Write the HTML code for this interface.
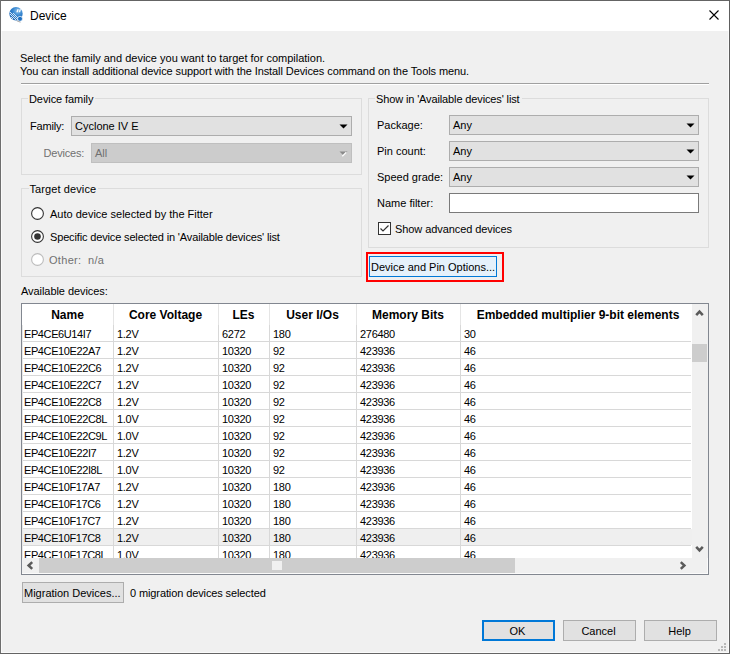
<!DOCTYPE html><html><head><meta charset="utf-8"><style>
*{margin:0;padding:0;box-sizing:border-box}
html,body{width:730px;height:654px;overflow:hidden;background:#f0f0f0}
body{position:relative;font-family:"Liberation Sans",sans-serif}
.b{position:absolute}
.t{position:absolute;white-space:nowrap;font-size:11px;line-height:13px;color:#000}
.t12{position:absolute;white-space:nowrap;font-size:12px;line-height:13px;color:#000}
.h{position:absolute;white-space:nowrap;font-size:12px;line-height:13px;font-weight:bold;color:#000;text-align:center}
.c{position:absolute;white-space:nowrap;font-size:11px;line-height:13px;color:#000;letter-spacing:-0.4px}
.g{color:#707070}
</style></head><body>
<div class="b" style="left:0px;top:0px;width:730px;height:654px;background:#f0f0f0"></div>
<div class="b" style="left:0px;top:0px;width:730px;height:31px;background:#fff"></div>
<div class="b" style="left:0px;top:0px;width:730px;height:1px;background:#646464"></div>
<div class="b" style="left:0px;top:0px;width:1px;height:654px;background:#6e6e6e"></div>
<div class="b" style="left:729px;top:0px;width:1px;height:654px;background:#5e5e5e"></div>
<div class="b" style="left:0px;top:653px;width:730px;height:1px;background:#646464"></div>
<div class="b" style="left:1px;top:31px;width:1px;height:622px;background:#fafafa"></div>
<div class="b" style="left:1px;top:652px;width:728px;height:1px;background:#fafafa"></div>
<div class="b" style="left:728px;top:31px;width:1px;height:622px;background:#fafafa"></div>
<svg class="b" style="left:6px;top:4px" width="18" height="20" viewBox="0 0 18 20"><defs><radialGradient id="gg" cx="0.62" cy="0.3" r="0.8"><stop offset="0" stop-color="#8cc0ea"/><stop offset="0.45" stop-color="#3585cf"/><stop offset="1" stop-color="#1a62b0"/></radialGradient></defs><circle cx="10.0" cy="9.7" r="6.7" fill="url(#gg)"/><g fill="#ffffff" opacity="0.8"><rect x="4" y="8" width="1" height="1"/><rect x="5" y="9" width="1" height="1"/><rect x="7" y="9" width="1" height="1"/><rect x="4" y="10" width="1" height="1"/><rect x="6" y="10" width="1" height="1"/><rect x="8" y="10" width="1" height="1"/><rect x="5" y="11" width="1" height="1"/><rect x="7" y="11" width="1" height="1"/><rect x="9" y="11" width="1" height="1"/><rect x="6" y="12" width="1" height="1"/><rect x="8" y="12" width="1" height="1"/><rect x="10" y="12" width="1" height="1"/><rect x="5" y="13" width="1" height="1"/><rect x="7" y="13" width="1" height="1"/><rect x="9" y="13" width="1" height="1"/><rect x="11" y="13" width="1" height="1"/><rect x="6" y="14" width="1" height="1"/><rect x="8" y="14" width="1" height="1"/><rect x="10" y="14" width="1" height="1"/><rect x="12" y="14" width="1" height="1"/><rect x="9" y="15" width="1" height="1"/><rect x="11" y="15" width="1" height="1"/></g><path d="M11.3 5.2 L12.8 5.2 L11.8 8.3 L10.3 8.3Z M13.6 5.2 L15.1 5.2 L14.1 8.3 L12.6 8.3Z" fill="#fff" opacity="0.95"/><circle cx="14" cy="14.8" r="2.5" fill="#1e6fc0" stroke="#ffffff" stroke-width="0.7"/><path d="M10.8 16.8 L14.5 18.2" stroke="#8a8a8a" stroke-width="0.9" opacity="0.8"/></svg>
<div class="t12" style="left:30px;top:10px;">Device</div>
<svg class="b" style="left:708px;top:9px" width="12" height="12" viewBox="0 0 12 12"><path d="M1.5 1.5L10.5 10.5M10.5 1.5L1.5 10.5" stroke="#000" stroke-width="1.1"/></svg>
<div class="t" style="left:20px;top:52px;">Select the family and device you want to target for compilation.</div>
<div class="t" style="left:20px;top:65px;letter-spacing:-0.09px">You can install additional device support with the Install Devices command on the Tools menu.</div>
<div class="b" style="left:21px;top:83px;width:688px;height:1px;background:#a0a0a0"></div>
<div class="b" style="left:21px;top:84px;width:688px;height:1px;background:#fff"></div>
<div class="b" style="left:21px;top:98px;width:341px;height:77px;border:1px solid #dcdcdc"></div>
<div class="t" style="left:28.3px;top:93px;padding:0 2px 0 0.7px;background:#f0f0f0;letter-spacing:-0.08px">Device family</div>
<div class="b" style="left:21px;top:188px;width:341px;height:89px;border:1px solid #dcdcdc"></div>
<div class="t" style="left:28.8px;top:183px;padding:0 2px 0 0.7px;background:#f0f0f0;letter-spacing:0.1px">Target device</div>
<div class="b" style="left:368px;top:98px;width:341px;height:150px;border:1px solid #dcdcdc"></div>
<div class="t" style="left:375.3px;top:93px;padding:0 2px 0 0.7px;background:#f0f0f0;letter-spacing:-0.13px">Show in 'Available devices' list</div>
<div class="t" style="left:30px;top:120px;letter-spacing:-0.2px">Family:</div>
<div class="b" style="left:71px;top:116px;width:281px;height:20px;background:#e1e1e1;border:1px solid #adadad"></div>
<div class="t" style="left:75px;top:120px;">Cyclone IV E</div>
<svg class="b" style="left:339px;top:124px" width="9" height="6" viewBox="0 0 9 6"><path d="M0.5 0.5H8.5L4.5 4.5Z" fill="#000"/></svg>
<div class="t g" style="left:43.5px;top:147px;letter-spacing:-0.2px">Devices:</div>
<div class="b" style="left:91px;top:143px;width:261px;height:20px;background:#cccccc;border:1px solid #bfbfbf"></div>
<div class="t g" style="left:95px;top:147px;">All</div>
<svg class="b" style="left:339px;top:151px" width="9" height="6" viewBox="0 0 9 6"><path d="M0.5 0.5H8.5L4.5 4.5Z" fill="#8a8a8a"/><path d="M3.3 5.2L7.3 1.3" stroke="#fff" stroke-width="1.3"/></svg>
<svg class="b" style="left:30px;top:206px" width="14" height="14" viewBox="0 0 14 14"><circle cx="7.5" cy="7.5" r="5.9" fill="#fff" stroke="#333" stroke-width="1.1"/></svg>
<svg class="b" style="left:30px;top:229px" width="14" height="14" viewBox="0 0 14 14"><circle cx="7.5" cy="7.5" r="5.9" fill="#fff" stroke="#333" stroke-width="1.1"/><circle cx="7.5" cy="7.5" r="3.3" fill="#333"/></svg>
<svg class="b" style="left:30px;top:252px" width="14" height="14" viewBox="0 0 14 14"><circle cx="7.5" cy="7.5" r="5.9" fill="#fff" stroke="#bcbcbc" stroke-width="1.1"/></svg>
<div class="t" style="left:50px;top:208px;">Auto device selected by the Fitter</div>
<div class="t" style="left:50px;top:231px;letter-spacing:-0.15px">Specific device selected in 'Available devices' list</div>
<div class="t g" style="left:49px;top:254px;letter-spacing:0.3px">Other:&nbsp; n/a</div>
<div class="t" style="left:377px;top:119px;">Package:</div>
<div class="t" style="left:377px;top:145px;">Pin count:</div>
<div class="t" style="left:377px;top:171px;">Speed grade:</div>
<div class="t" style="left:377px;top:197px;">Name filter:</div>
<div class="b" style="left:449px;top:115px;width:250px;height:20px;background:#e1e1e1;border:1px solid #adadad"></div>
<div class="t" style="left:453px;top:119px;">Any</div>
<svg class="b" style="left:686px;top:123px" width="9" height="6" viewBox="0 0 9 6"><path d="M0.5 0.5H8.5L4.5 4.5Z" fill="#000"/></svg>
<div class="b" style="left:449px;top:141px;width:250px;height:20px;background:#e1e1e1;border:1px solid #adadad"></div>
<div class="t" style="left:453px;top:145px;">Any</div>
<svg class="b" style="left:686px;top:149px" width="9" height="6" viewBox="0 0 9 6"><path d="M0.5 0.5H8.5L4.5 4.5Z" fill="#000"/></svg>
<div class="b" style="left:449px;top:167px;width:250px;height:20px;background:#e1e1e1;border:1px solid #adadad"></div>
<div class="t" style="left:453px;top:171px;">Any</div>
<svg class="b" style="left:686px;top:175px" width="9" height="6" viewBox="0 0 9 6"><path d="M0.5 0.5H8.5L4.5 4.5Z" fill="#000"/></svg>
<div class="b" style="left:449px;top:193px;width:250px;height:20px;background:#fff;border:1px solid #7a7a7a"></div>
<div class="b" style="left:378px;top:222px;width:13px;height:13px;background:#fff;border:1px solid #333"></div>
<svg class="b" style="left:378px;top:222px" width="13" height="13" viewBox="0 0 13 13"><path d="M2.5 6.5L5 9L10.5 3.5" fill="none" stroke="#333" stroke-width="1.2"/></svg>
<div class="t" style="left:395px;top:223px;letter-spacing:-0.08px">Show advanced devices</div>
<div class="b" style="left:366px;top:252px;width:138px;height:30px;border:2px solid #ff0000"></div>
<div class="b" style="left:369px;top:256px;width:128px;height:21px;background:#e5f1fb;border:1px solid #0078d7"></div>
<div class="t" style="left:371px;top:261px;">Device and Pin Options...</div>
<div class="t" style="left:21px;top:285px;letter-spacing:-0.06px">Available devices:</div>
<div class="b" style="left:21px;top:303px;width:688px;height:272px;background:#fff;border:1px solid #828790"></div>
<div class="b" style="left:113px;top:304px;width:1px;height:21px;background:#e5e5e5"></div>
<div class="b" style="left:218px;top:304px;width:1px;height:21px;background:#e5e5e5"></div>
<div class="b" style="left:269px;top:304px;width:1px;height:21px;background:#e5e5e5"></div>
<div class="b" style="left:356px;top:304px;width:1px;height:21px;background:#e5e5e5"></div>
<div class="b" style="left:460px;top:304px;width:1px;height:21px;background:#e5e5e5"></div>
<div class="h" style="left:22px;top:309px;width:91px">Name</div>
<div class="h" style="left:113px;top:309px;width:105px">Core Voltage</div>
<div class="h" style="left:218px;top:309px;width:51px">LEs</div>
<div class="h" style="left:269px;top:309px;width:87px">User I/Os</div>
<div class="h" style="left:356px;top:309px;width:104px">Memory Bits</div>
<div class="h" style="left:460px;top:309px;width:236px">Embedded multiplier 9-bit elements</div>
<div class="c" style="left:24px;top:328px;letter-spacing:-0.4px">EP4CE6U14I7</div>
<div class="c" style="left:117px;top:328px;letter-spacing:-0.3px">1.2V</div>
<div class="c" style="left:222px;top:328px;letter-spacing:-0.3px">6272</div>
<div class="c" style="left:273px;top:328px;letter-spacing:-0.3px">180</div>
<div class="c" style="left:360px;top:328px;letter-spacing:-0.3px">276480</div>
<div class="c" style="left:464px;top:328px;letter-spacing:-0.3px">30</div>
<div class="c" style="left:24px;top:345px;letter-spacing:-0.4px">EP4CE10E22A7</div>
<div class="c" style="left:117px;top:345px;letter-spacing:-0.3px">1.2V</div>
<div class="c" style="left:222px;top:345px;letter-spacing:-0.3px">10320</div>
<div class="c" style="left:273px;top:345px;letter-spacing:-0.3px">92</div>
<div class="c" style="left:360px;top:345px;letter-spacing:-0.3px">423936</div>
<div class="c" style="left:464px;top:345px;letter-spacing:-0.3px">46</div>
<div class="c" style="left:24px;top:362px;letter-spacing:-0.4px">EP4CE10E22C6</div>
<div class="c" style="left:117px;top:362px;letter-spacing:-0.3px">1.2V</div>
<div class="c" style="left:222px;top:362px;letter-spacing:-0.3px">10320</div>
<div class="c" style="left:273px;top:362px;letter-spacing:-0.3px">92</div>
<div class="c" style="left:360px;top:362px;letter-spacing:-0.3px">423936</div>
<div class="c" style="left:464px;top:362px;letter-spacing:-0.3px">46</div>
<div class="c" style="left:24px;top:379px;letter-spacing:-0.4px">EP4CE10E22C7</div>
<div class="c" style="left:117px;top:379px;letter-spacing:-0.3px">1.2V</div>
<div class="c" style="left:222px;top:379px;letter-spacing:-0.3px">10320</div>
<div class="c" style="left:273px;top:379px;letter-spacing:-0.3px">92</div>
<div class="c" style="left:360px;top:379px;letter-spacing:-0.3px">423936</div>
<div class="c" style="left:464px;top:379px;letter-spacing:-0.3px">46</div>
<div class="c" style="left:24px;top:396px;letter-spacing:-0.4px">EP4CE10E22C8</div>
<div class="c" style="left:117px;top:396px;letter-spacing:-0.3px">1.2V</div>
<div class="c" style="left:222px;top:396px;letter-spacing:-0.3px">10320</div>
<div class="c" style="left:273px;top:396px;letter-spacing:-0.3px">92</div>
<div class="c" style="left:360px;top:396px;letter-spacing:-0.3px">423936</div>
<div class="c" style="left:464px;top:396px;letter-spacing:-0.3px">46</div>
<div class="c" style="left:24px;top:413px;letter-spacing:-0.4px">EP4CE10E22C8L</div>
<div class="c" style="left:117px;top:413px;letter-spacing:-0.3px">1.0V</div>
<div class="c" style="left:222px;top:413px;letter-spacing:-0.3px">10320</div>
<div class="c" style="left:273px;top:413px;letter-spacing:-0.3px">92</div>
<div class="c" style="left:360px;top:413px;letter-spacing:-0.3px">423936</div>
<div class="c" style="left:464px;top:413px;letter-spacing:-0.3px">46</div>
<div class="c" style="left:24px;top:430px;letter-spacing:-0.4px">EP4CE10E22C9L</div>
<div class="c" style="left:117px;top:430px;letter-spacing:-0.3px">1.0V</div>
<div class="c" style="left:222px;top:430px;letter-spacing:-0.3px">10320</div>
<div class="c" style="left:273px;top:430px;letter-spacing:-0.3px">92</div>
<div class="c" style="left:360px;top:430px;letter-spacing:-0.3px">423936</div>
<div class="c" style="left:464px;top:430px;letter-spacing:-0.3px">46</div>
<div class="c" style="left:24px;top:447px;letter-spacing:-0.4px">EP4CE10E22I7</div>
<div class="c" style="left:117px;top:447px;letter-spacing:-0.3px">1.2V</div>
<div class="c" style="left:222px;top:447px;letter-spacing:-0.3px">10320</div>
<div class="c" style="left:273px;top:447px;letter-spacing:-0.3px">92</div>
<div class="c" style="left:360px;top:447px;letter-spacing:-0.3px">423936</div>
<div class="c" style="left:464px;top:447px;letter-spacing:-0.3px">46</div>
<div class="c" style="left:24px;top:464px;letter-spacing:-0.4px">EP4CE10E22I8L</div>
<div class="c" style="left:117px;top:464px;letter-spacing:-0.3px">1.0V</div>
<div class="c" style="left:222px;top:464px;letter-spacing:-0.3px">10320</div>
<div class="c" style="left:273px;top:464px;letter-spacing:-0.3px">92</div>
<div class="c" style="left:360px;top:464px;letter-spacing:-0.3px">423936</div>
<div class="c" style="left:464px;top:464px;letter-spacing:-0.3px">46</div>
<div class="c" style="left:24px;top:481px;letter-spacing:-0.4px">EP4CE10F17A7</div>
<div class="c" style="left:117px;top:481px;letter-spacing:-0.3px">1.2V</div>
<div class="c" style="left:222px;top:481px;letter-spacing:-0.3px">10320</div>
<div class="c" style="left:273px;top:481px;letter-spacing:-0.3px">180</div>
<div class="c" style="left:360px;top:481px;letter-spacing:-0.3px">423936</div>
<div class="c" style="left:464px;top:481px;letter-spacing:-0.3px">46</div>
<div class="c" style="left:24px;top:498px;letter-spacing:-0.4px">EP4CE10F17C6</div>
<div class="c" style="left:117px;top:498px;letter-spacing:-0.3px">1.2V</div>
<div class="c" style="left:222px;top:498px;letter-spacing:-0.3px">10320</div>
<div class="c" style="left:273px;top:498px;letter-spacing:-0.3px">180</div>
<div class="c" style="left:360px;top:498px;letter-spacing:-0.3px">423936</div>
<div class="c" style="left:464px;top:498px;letter-spacing:-0.3px">46</div>
<div class="c" style="left:24px;top:515px;letter-spacing:-0.4px">EP4CE10F17C7</div>
<div class="c" style="left:117px;top:515px;letter-spacing:-0.3px">1.2V</div>
<div class="c" style="left:222px;top:515px;letter-spacing:-0.3px">10320</div>
<div class="c" style="left:273px;top:515px;letter-spacing:-0.3px">180</div>
<div class="c" style="left:360px;top:515px;letter-spacing:-0.3px">423936</div>
<div class="c" style="left:464px;top:515px;letter-spacing:-0.3px">46</div>
<div class="b" style="left:22px;top:529px;width:670px;height:16px;background:#efefef"></div>
<div class="c" style="left:24px;top:532px;letter-spacing:-0.4px">EP4CE10F17C8</div>
<div class="c" style="left:117px;top:532px;letter-spacing:-0.3px">1.2V</div>
<div class="c" style="left:222px;top:532px;letter-spacing:-0.3px">10320</div>
<div class="c" style="left:273px;top:532px;letter-spacing:-0.3px">180</div>
<div class="c" style="left:360px;top:532px;letter-spacing:-0.3px">423936</div>
<div class="c" style="left:464px;top:532px;letter-spacing:-0.3px">46</div>
<div class="c" style="left:24px;top:549px;letter-spacing:-0.4px">EP4CE10F17C8L</div>
<div class="c" style="left:117px;top:549px;letter-spacing:-0.3px">1.0V</div>
<div class="c" style="left:222px;top:549px;letter-spacing:-0.3px">10320</div>
<div class="c" style="left:273px;top:549px;letter-spacing:-0.3px">180</div>
<div class="c" style="left:360px;top:549px;letter-spacing:-0.3px">423936</div>
<div class="c" style="left:464px;top:549px;letter-spacing:-0.3px">46</div>
<div class="b" style="left:22px;top:558px;width:686px;height:16px;background:#f0f0f0"></div>
<div class="b" style="left:22px;top:341px;width:669px;height:1px;background:#d8d8d8"></div>
<div class="b" style="left:22px;top:358px;width:669px;height:1px;background:#d8d8d8"></div>
<div class="b" style="left:22px;top:375px;width:669px;height:1px;background:#d8d8d8"></div>
<div class="b" style="left:22px;top:392px;width:669px;height:1px;background:#d8d8d8"></div>
<div class="b" style="left:22px;top:409px;width:669px;height:1px;background:#d8d8d8"></div>
<div class="b" style="left:22px;top:426px;width:669px;height:1px;background:#d8d8d8"></div>
<div class="b" style="left:22px;top:443px;width:669px;height:1px;background:#d8d8d8"></div>
<div class="b" style="left:22px;top:460px;width:669px;height:1px;background:#d8d8d8"></div>
<div class="b" style="left:22px;top:477px;width:669px;height:1px;background:#d8d8d8"></div>
<div class="b" style="left:22px;top:494px;width:669px;height:1px;background:#d8d8d8"></div>
<div class="b" style="left:22px;top:511px;width:669px;height:1px;background:#d8d8d8"></div>
<div class="b" style="left:22px;top:528px;width:669px;height:1px;background:#d8d8d8"></div>
<div class="b" style="left:22px;top:545px;width:669px;height:1px;background:#d8d8d8"></div>
<div class="b" style="left:113px;top:325px;width:1px;height:233px;background:#d8d8d8"></div>
<div class="b" style="left:218px;top:325px;width:1px;height:233px;background:#d8d8d8"></div>
<div class="b" style="left:269px;top:325px;width:1px;height:233px;background:#d8d8d8"></div>
<div class="b" style="left:356px;top:325px;width:1px;height:233px;background:#d8d8d8"></div>
<div class="b" style="left:460px;top:325px;width:1px;height:233px;background:#d8d8d8"></div>
<div class="b" style="left:22px;top:325px;width:1px;height:233px;background:#e8e8e8"></div>
<div class="b" style="left:692px;top:304px;width:16px;height:254px;background:#f0f0f0"></div>
<div class="b" style="left:692px;top:344px;width:15px;height:18px;background:#cdcdcd"></div>
<svg class="b" style="left:695px;top:309px" width="9" height="8" viewBox="0 0 9 8"><path d="M1.2 6.2L4.5 2.6L7.8 6.2" fill="none" stroke="#5a5a5a" stroke-width="2.5"/></svg>
<svg class="b" style="left:695px;top:545px" width="9" height="8" viewBox="0 0 9 8"><path d="M1.2 1.8L4.5 5.4L7.8 1.8" fill="none" stroke="#5a5a5a" stroke-width="2.5"/></svg>
<div class="b" style="left:22px;top:558px;width:670px;height:16px;background:#f0f0f0"></div>
<div class="b" style="left:39px;top:558px;width:476px;height:15px;background:#cdcdcd"></div>
<div class="b" style="left:22px;top:573px;width:686px;height:1px;background:#fbfbfb"></div>
<div class="b" style="left:707px;top:558px;width:1px;height:16px;background:#fbfbfb"></div>
<div class="b" style="left:272px;top:561px;width:10px;height:9px;background:#f0f0f0"></div>
<svg class="b" style="left:26px;top:561px" width="8" height="9" viewBox="0 0 8 9"><path d="M6.2 1.2L2.6 4.5L6.2 7.8" fill="none" stroke="#5a5a5a" stroke-width="2.5"/></svg>
<svg class="b" style="left:679px;top:561px" width="8" height="9" viewBox="0 0 8 9"><path d="M1.8 1.2L5.4 4.5L1.8 7.8" fill="none" stroke="#5a5a5a" stroke-width="2.5"/></svg>
<div class="b" style="left:22px;top:582px;width:102px;height:21px;background:#e1e1e1;border:1px solid #adadad"></div>
<div class="t" style="left:24px;top:587px;">Migration Devices...</div>
<div class="t" style="left:130px;top:587px;letter-spacing:-0.11px">0 migration devices selected</div>
<div class="b" style="left:482px;top:620px;width:73px;height:21px;background:#e1e1e1;border:2px solid #0078d7"></div>
<div class="t" style="left:481px;top:625px;width:73px;text-align:center">OK</div>
<div class="b" style="left:563px;top:620px;width:73px;height:21px;background:#e1e1e1;border:1px solid #adadad"></div>
<div class="t" style="left:562px;top:625px;width:73px;text-align:center">Cancel</div>
<div class="b" style="left:644px;top:620px;width:73px;height:21px;background:#e1e1e1;border:1px solid #adadad"></div>
<div class="t" style="left:643px;top:625px;width:73px;text-align:center">Help</div>
<div class="b" style="left:724px;top:643px;width:2px;height:2px;background:#b8b8b8"></div>
<div class="b" style="left:721px;top:646px;width:2px;height:2px;background:#b8b8b8"></div>
<div class="b" style="left:724px;top:646px;width:2px;height:2px;background:#b8b8b8"></div>
<div class="b" style="left:718px;top:649px;width:2px;height:2px;background:#b8b8b8"></div>
<div class="b" style="left:721px;top:649px;width:2px;height:2px;background:#b8b8b8"></div>
<div class="b" style="left:724px;top:649px;width:2px;height:2px;background:#b8b8b8"></div>
</body></html>
